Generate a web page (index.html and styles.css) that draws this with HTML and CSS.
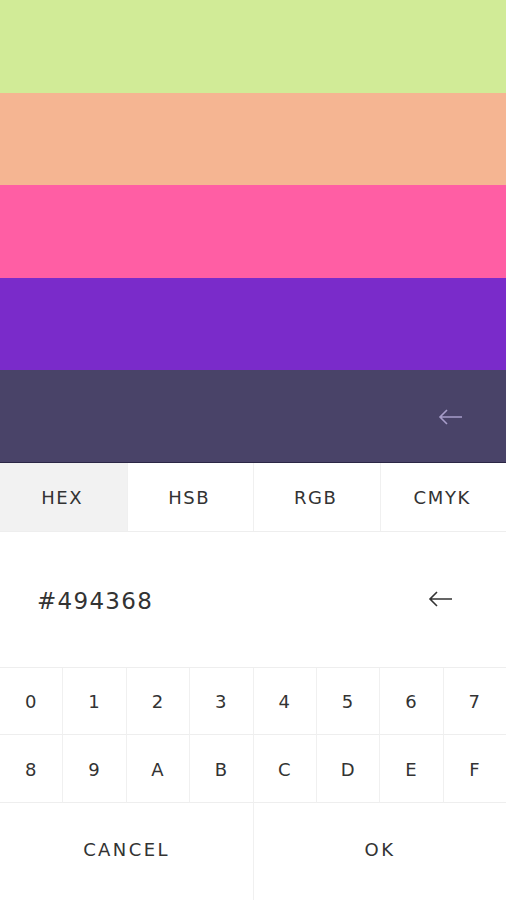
FILE: index.html
```html
<!DOCTYPE html>
<html>
<head>
<meta charset="utf-8">
<link rel="stylesheet" href="styles.css">
</head>
<body>
<div class="app">
  <div class="bands">
    <div class="band b1"></div>
    <div class="band b2"></div>
    <div class="band b3"></div>
    <div class="band b4"></div>
    <div class="band b5">
      <svg class="arrow light" width="26" height="16" viewBox="0 0 26 16"><path d="M24 8H2M9 1L2 8l7 7" fill="none" stroke="currentColor" stroke-width="1.6"/></svg>
    </div>
  </div>
  <div class="tabs">
    <div class="tab active">HEX</div>
    <div class="tab">HSB</div>
    <div class="tab">RGB</div>
    <div class="tab">CMYK</div>
  </div>
  <div class="input">
    <span class="value">#494368</span>
    <svg class="arrow dark" width="26" height="16" viewBox="0 0 26 16"><path d="M24 8H2M9 1L2 8l7 7" fill="none" stroke="currentColor" stroke-width="1.6"/></svg>
  </div>
  <div class="keys">
    <div class="key">0</div><div class="key">1</div><div class="key">2</div><div class="key">3</div>
    <div class="key">4</div><div class="key">5</div><div class="key">6</div><div class="key">7</div>
    <div class="key">8</div><div class="key">9</div><div class="key">A</div><div class="key">B</div>
    <div class="key">C</div><div class="key">D</div><div class="key">E</div><div class="key">F</div>
  </div>
  <div class="actions">
    <div class="action">CANCEL</div>
    <div class="action">OK</div>
  </div>
</div>
</body>
</html>
```
FILE: styles.css
```css
html, body {
  margin: 0;
  padding: 0;
  background: #fff;
}
body {
  font-family: "DejaVu Sans", sans-serif;
  color: #333;
}
.app {
  width: 506px;
  height: 900px;
  display: flex;
  flex-direction: column;
}
.bands {
  display: flex;
  flex-direction: column;
}
.band {
  height: 92.6px;
}
.b1 { background: #d1eb97; }
.b2 { background: #f5b592; }
.b3 { background: #ff5ea4; }
.b4 { background: #7a2bca; }
.b5 {
  background: #494368;
  display: flex;
  align-items: center;
  justify-content: flex-end;
  padding-right: 42px;
  border-bottom: 1px solid #2b2645;
  box-sizing: border-box;
}
.arrow.light { color: #a79dc9; margin-top: 2px; }
.arrow.dark { color: #333; }
.tabs {
  display: grid;
  grid-template-columns: repeat(4, 1fr);
  height: 68px;
  border-bottom: 1px solid #eee;
}
.tab {
  display: flex;
  align-items: center;
  justify-content: center;
  font-size: 18px;
  letter-spacing: 1.6px;
  padding-top: 2px;
  padding-right: 2px;
  border-left: 1px solid #f0f0f0;
}
.tab:first-child { border-left: none; }
.tab.active { background: #f2f2f2; }
.input {
  height: 135px;
  display: flex;
  align-items: center;
  justify-content: space-between;
  padding: 0 52px 0 37px;
  border-bottom: 1px solid #eee;
}
.value {
  font-size: 23px;
  letter-spacing: 1.3px;
  margin-top: 4px;
}
.keys {
  display: grid;
  grid-template-columns: repeat(8, 1fr);
  grid-auto-rows: 67.5px;
  margin-left: -1px;
}
.key {
  display: flex;
  align-items: center;
  justify-content: center;
  font-size: 18px;
  border-left: 1px solid #f0f0f0;
  border-bottom: 1px solid #eee;
  padding-top: 1px;
  padding-right: 1px;
}
.actions {
  flex: 1;
  display: grid;
  grid-template-columns: 1fr 1fr;
}
.action {
  display: flex;
  align-items: center;
  justify-content: center;
  font-size: 18px;
  letter-spacing: 2.4px;
  border-left: 1px solid #f0f0f0;
  padding-bottom: 4px;
}
.action:first-child { border-left: none; }
```
